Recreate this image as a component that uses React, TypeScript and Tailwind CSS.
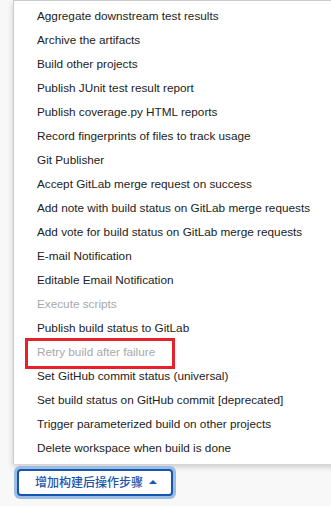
import React from "react";

const items: { label: string; disabled?: boolean; boxed?: boolean }[] = [
  { label: "Aggregate downstream test results" },
  { label: "Archive the artifacts" },
  { label: "Build other projects" },
  { label: "Publish JUnit test result report" },
  { label: "Publish coverage.py HTML reports" },
  { label: "Record fingerprints of files to track usage" },
  { label: "Git Publisher" },
  { label: "Accept GitLab merge request on success" },
  { label: "Add note with build status on GitLab merge requests" },
  { label: "Add vote for build status on GitLab merge requests" },
  { label: "E-mail Notification" },
  { label: "Editable Email Notification" },
  { label: "Execute scripts", disabled: true },
  { label: "Publish build status to GitLab" },
  { label: "Retry build after failure", disabled: true, boxed: true },
  { label: "Set GitHub commit status (universal)" },
  { label: "Set build status on GitHub commit [deprecated]" },
  { label: "Trigger parameterized build on other projects" },
  { label: "Delete workspace when build is done" },
];

export default function App() {
  return (
    <div
      className="w-[331px] h-[506px] bg-[#f8f8f8] overflow-hidden relative"
      style={{ fontFamily: '"Liberation Sans", Arial, "Noto Sans CJK SC", sans-serif' }}
    >
      <div className="ml-[13px] w-[330px] bg-white border-t border-l border-[#c8cbcf] pt-[3px] pb-[4px] shadow-[0_3px_6px_rgba(0,0,0,0.18)]">
        {items.map((it) => (
          <div key={it.label} className="h-[24px] flex items-center pl-[23px] relative">
            <span
              className={
                "text-[11.75px] leading-none whitespace-nowrap " +
                (it.disabled ? "text-[#a8a8a8]" : "text-[#222]")
              }
            >
              {it.label}
            </span>
            {it.boxed && (
              <div className="absolute left-[11px] top-[-2px] w-[150px] h-[31px] border-[3px] border-[#e8202a]" />
            )}
          </div>
        ))}
      </div>
      <div className="ml-[14px] mt-[2px] w-[162px] h-[33px] rounded-[6px] bg-[#9cbde3] p-[3px]">
        <div className="w-full h-full rounded-[4px] bg-white border-2 border-[#1555ad] flex items-center pl-[16px] gap-[6px]">
          <span className="text-[12px] leading-none text-[#1a56ad] font-medium">增加构建后操作步骤</span>
          <svg width="8" height="4" viewBox="0 0 8 4" className="mb-[1px]">
            <path d="M0 4 L4 0 L8 4 Z" fill="#1a56ad" />
          </svg>
        </div>
      </div>
    </div>
  );
}
